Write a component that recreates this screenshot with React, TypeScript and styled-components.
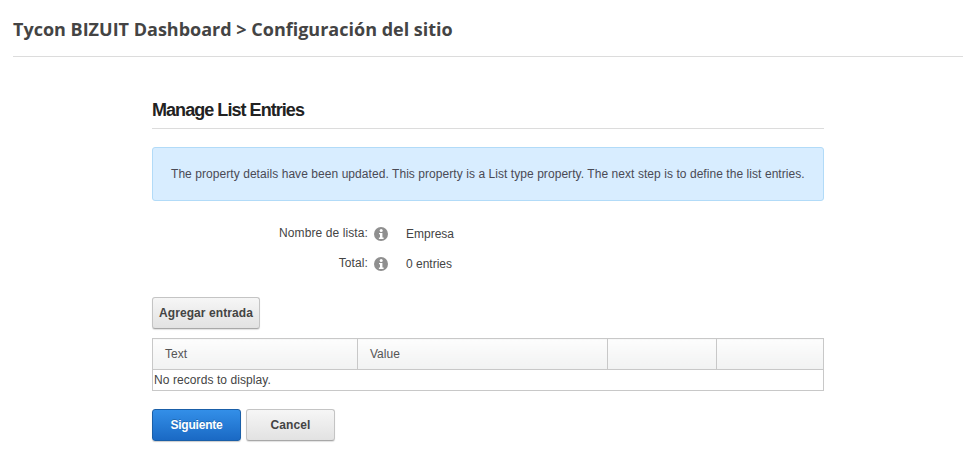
import React from "react"
import styled, { createGlobalStyle, css } from "styled-components"

const GlobalStyle = createGlobalStyle`
  html, body {
    margin: 0;
    padding: 0;
    background: #fff;
  }
  body {
    font-family: "Liberation Sans", Arial, sans-serif;
    font-size: 12px;
    color: #444;
  }
`

const InfoIcon = () => (
  <InfoSvg viewBox="0 0 14 14" aria-hidden="true">
    <circle cx="7" cy="7" r="7" fill="#8f8f8f" />
    <circle cx="7.2" cy="3.4" r="1.5" fill="#fff" />
    <path d="M5 6h3.4v4.6H9.6V12H4.9v-1.4H6V7.3H5z" fill="#fff" />
  </InfoSvg>
)

const App: React.FC = () => {
  return (
    <Page>
      <GlobalStyle />
      <PageHeader>
        <PageTitle>Tycon BIZUIT Dashboard &gt; Configuración del sitio</PageTitle>
      </PageHeader>
      <Content>
        <SectionTitle>Manage List Entries</SectionTitle>
        <Alert>
          The property details have been updated. This property is a List type property. The next
          step is to define the list entries.
        </Alert>
        <Details>
          <DetailRow>
            <DetailLabel>Nombre de lista:</DetailLabel>
            <InfoIcon />
            <DetailValue>Empresa</DetailValue>
          </DetailRow>
          <DetailRow>
            <DetailLabel>Total:</DetailLabel>
            <InfoIcon />
            <DetailValue>0 entries</DetailValue>
          </DetailRow>
        </Details>
        <AddButton type="button">Agregar entrada</AddButton>
        <Grid>
          <thead>
            <tr>
              <HeadCell $width={205}>Text</HeadCell>
              <HeadCell $width={250}>Value</HeadCell>
              <HeadCell $width={109} />
              <HeadCell $width={107} />
            </tr>
          </thead>
          <tbody>
            <tr>
              <EmptyCell colSpan={4}>No records to display.</EmptyCell>
            </tr>
          </tbody>
        </Grid>
        <Actions>
          <ActionButton type="button" $primary>
            Siguiente
          </ActionButton>
          <ActionButton type="button">Cancel</ActionButton>
        </Actions>
      </Content>
    </Page>
  )
}

export default App

const Page = styled.div`
  width: 973px;
  height: 468px;
  overflow: hidden;
  box-sizing: border-box;
  padding: 0 10px 0 13px;
`
const PageHeader = styled.header`
  height: 56px;
  border-bottom: 1px solid #dcdcdc;
  display: flex;
  align-items: center;
  box-sizing: content-box;
`
const PageTitle = styled.h1`
  margin: 2px 0 0;
  font-family: "Open Sans", sans-serif;
  font-size: 18px;
  font-weight: 700;
  color: #444;
`
const Content = styled.main`
  width: 672px;
  margin-left: 139px;
  padding-top: 36px;
`
const SectionTitle = styled.h2`
  margin: 0;
  height: 35px;
  line-height: 35px;
  font-size: 18px;
  font-weight: 700;
  letter-spacing: -0.95px;
  color: #222;
  border-bottom: 1px solid #dcdcdc;
`
const Alert = styled.div`
  margin-top: 18px;
  height: 54px;
  box-sizing: border-box;
  display: flex;
  align-items: center;
  padding: 0 18px;
  background: #d8edff;
  border: 1px solid #b2dbf8;
  border-radius: 3px;
  font-size: 12px;
  letter-spacing: 0.06px;
  white-space: nowrap;
  color: #4a4a55;
`
const Details = styled.div`
  margin-top: 25px;
  display: flex;
  flex-direction: column;
  gap: 14px;
`
const DetailRow = styled.div`
  display: flex;
  align-items: center;
  height: 16px;
`
const DetailLabel = styled.span`
  width: 216px;
  text-align: right;
  letter-spacing: 0.1px;
  position: relative;
  top: -1px;
`
const InfoSvg = styled.svg`
  width: 14px;
  height: 14px;
  margin-left: 6px;
  flex: none;
`
const DetailValue = styled.span`
  margin-left: 18px;
`
const buttonBase = css`
  display: block;
  box-sizing: border-box;
  border-radius: 3px;
  font-family: "Liberation Sans", Arial, sans-serif;
  font-size: 12px;
  font-weight: 700;
  padding: 0;
`
const greyButton = css`
  color: #444;
  letter-spacing: 0.08px;
  border: 1px solid #c4c4c4;
  border-bottom-color: #a8a8a8;
  background: linear-gradient(#f6f6f6, #e2e2e2);
  box-shadow: 0 1px 1px rgba(0, 0, 0, 0.12);
`
const AddButton = styled.button`
  ${buttonBase}
  ${greyButton}
  margin-top: 25px;
  width: 108px;
  height: 32px;
`
const Grid = styled.table`
  margin-top: 9px;
  width: 671px;
  table-layout: fixed;
  border-collapse: collapse;
  font-size: 12px;
`
const HeadCell = styled.th<{ $width: number }>`
  width: ${props => props.$width}px;
  height: 31px;
  padding: 0 0 0 12px;
  box-sizing: border-box;
  text-align: left;
  font-weight: 400;
  color: #555;
  border: 1px solid #c8c8c8;
  background: linear-gradient(#fdfdfd, #f1f2f2);
`
const EmptyCell = styled.td`
  height: 20px;
  padding: 0 1px;
  border: 1px solid #c8c8c8;
  letter-spacing: 0.08px;
  color: #444;
`
const Actions = styled.div`
  margin-top: 18px;
  display: flex;
  gap: 5px;
`
const ActionButton = styled.button<{ $primary?: boolean }>`
  ${buttonBase}
  width: 89px;
  height: 32px;
  ${props =>
    props.$primary
      ? css`
          color: #fff;
          letter-spacing: -0.2px;
          text-shadow: 0 -1px 0 rgba(0, 0, 0, 0.2);
          border: 1px solid #1a5fa8;
          background: linear-gradient(#338fe8, #1a69c4);
          box-shadow: 0 1px 1px rgba(0, 0, 0, 0.2);
        `
      : greyButton}
`
